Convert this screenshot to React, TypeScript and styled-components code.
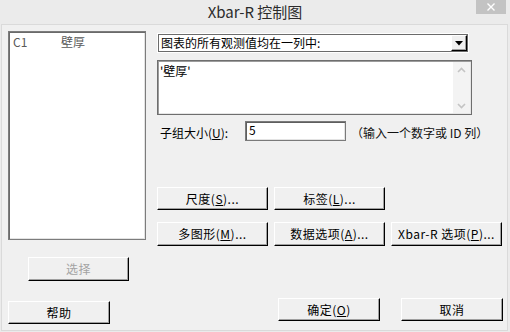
import styled, { createGlobalStyle } from 'styled-components';

const GlobalStyle = createGlobalStyle`
  html, body {
    margin: 0;
    padding: 0;
    background: #ebebeb;
  }
  body {
    font-family: "Noto Sans CJK SC", "Liberation Sans", sans-serif;
    font-size: 12px;
    color: #000;
  }
  * {
    box-sizing: border-box;
  }
`;

const Window = styled.div`
  width: 510px;
  height: 332px;
  display: flex;
  flex-direction: column;
  background: #ebebeb;
  overflow: hidden;
`;

const TitleBar = styled.div`
  height: 24px;
  display: grid;
  grid-template-columns: 1fr auto 1fr;
`;

const Title = styled.div`
  grid-column: 2;
  align-self: center;
  font-size: 15px;
  line-height: 20px;
  color: #2b2b2b;
`;

const CloseButton = styled.div`
  grid-column: 3;
  justify-self: end;
  align-self: start;
  margin-right: 4px;
  width: 30px;
  height: 14px;
  background: #c3c3c3;
  display: flex;
  align-items: center;
  justify-content: center;
`;

const Dialog = styled.div`
  flex: 1;
  margin: 0 2px 1px 1px;
  border: 1px solid #dadada;
  background: #f0f0f0;
  display: flex;
  flex-direction: column;
`;

const Main = styled.div`
  display: grid;
  grid-template-columns: 138px 346px;
  column-gap: 11px;
  padding: 6px 0 0 6px;
`;

const LeftCol = styled.div`
  display: flex;
  flex-direction: column;
  align-items: flex-start;
`;

const ListBox = styled.div`
  width: 138px;
  height: 209px;
  background: #fff;
  border: 1px solid #7c7c7c;
  box-shadow: inset 1px 1px 0 #6a6a6a, inset -1px -1px 0 #e3e3e3;
  padding: 3px 0 0 4px;
`;

const ListRow = styled.div`
  display: grid;
  grid-template-columns: 48px auto;
  color: #5a5a5a;
  line-height: 14px;
`;

const Btn = styled.button<{ $w: number; $h?: number; $mt?: number; $ml?: number }>`
  width: ${(p) => p.$w}px;
  height: ${(p) => p.$h ?? 23}px;
  margin: ${(p) => p.$mt ?? 0}px 0 0 ${(p) => p.$ml ?? 0}px;
  padding: 0;
  font-family: "Noto Sans CJK SC", "Liberation Sans", sans-serif;
  font-size: 12px;
  line-height: 14px;
  color: #000;
  background: #f0f0f0;
  border-top: 1px solid #fff;
  border-left: 1px solid #fff;
  border-right: 1px solid #000;
  border-bottom: 1px solid #000;
  box-shadow: inset -1px -1px 0 #a0a0a0;
  display: flex;
  align-items: center;
  justify-content: center;
  letter-spacing: 0.5px;

  &:disabled {
    color: #a3a3a3;
  }
`;

const RightCol = styled.div`
  display: flex;
  flex-direction: column;
  align-items: flex-start;
`;

const Combo = styled.div`
  margin: 3px 0 0 1px;
  width: 310px;
  height: 18px;
  border: 1px solid #6b6b6b;
  box-shadow: 0 0 0 1px #fff;
  background: #fff;
  display: flex;
  align-items: center;
`;

const ComboText = styled.div`
  flex: 1;
  padding-left: 2px;
  line-height: 16px;
`;

const ComboArrow = styled.div`
  width: 16px;
  height: 16px;
  background: #f0f0f0;
  border-top: 1px solid #fff;
  border-left: 1px solid #fff;
  border-right: 1px solid #000;
  border-bottom: 1px solid #000;
  box-shadow: inset -1px -1px 0 #a0a0a0;
  display: flex;
  align-items: center;
  justify-content: center;
`;

const TextArea = styled.div`
  margin-top: 8px;
  width: 315px;
  height: 55px;
  border: 1px solid #6e6e6e;
  box-shadow: inset 1px 1px 0 #9c9c9c, inset -1px -1px 0 #e6e6e6;
  background: #fff;
  display: flex;
  padding: 1px;
`;

const TextAreaContent = styled.div`
  flex: 1;
  padding: 2px 0 0 1px;
  line-height: 14px;
`;

const ScrollTrack = styled.div`
  width: 17px;
  background: #f3f3f3;
  display: flex;
  flex-direction: column;
  justify-content: space-between;
  align-items: center;
  padding: 5px 0 4px;
`;

const FieldRow = styled.div`
  margin-top: 6px;
  height: 20px;
  display: flex;
  align-items: center;
`;

const FieldLabel = styled.div`
  width: 88px;
  padding-left: 3px;
  padding-top: 2px;
`;

const Input = styled.div`
  width: 101px;
  height: 20px;
  background: #fff;
  border: 1px solid #7a7a7a;
  box-shadow: inset 1px 1px 0 #5e5e5e, inset -1px -1px 0 #e3e3e3;
  padding: 1px 0 0 3px;
  line-height: 14px;
`;

const Hint = styled.div`
  margin-left: 5px;
  padding-top: 2px;
  color: #111;
`;

const ButtonGrid = styled.div`
  margin-top: 46px;
  display: grid;
  grid-template-columns: repeat(3, 111px);
  grid-auto-rows: 23px;
  column-gap: 6px;
  row-gap: 12px;
`;

const BottomRow = styled.div`
  display: flex;
  align-items: flex-start;
  margin-top: 17px;
  padding-left: 6px;
`;

const Chevron = ({ up }: { up?: boolean }) => (
  <svg width="9" height="6" viewBox="0 0 9 6">
    <polyline
      points={up ? '1,5 4.5,1.5 8,5' : '1,1 4.5,4.5 8,1'}
      fill="none"
      stroke="#c4c4c4"
      strokeWidth="1.6"
    />
  </svg>
);

export default function App() {
  return (
    <>
      <GlobalStyle />
      <Window>
        <TitleBar>
          <Title>Xbar-R 控制图</Title>
          <CloseButton>
            <svg width="10" height="10" viewBox="0 0 10 10">
              <path d="M1.5 1.5 L8.5 8.5 M8.5 1.5 L1.5 8.5" stroke="#fff" strokeWidth="1.4" />
            </svg>
          </CloseButton>
        </TitleBar>

        <Dialog>
          <Main>
            <LeftCol>
              <ListBox>
                <ListRow>
                  <span>C1</span>
                  <span>壁厚</span>
                </ListRow>
              </ListBox>
              <Btn $w={101} $h={24} $mt={17} $ml={20} disabled>
                选择
              </Btn>
            </LeftCol>

            <RightCol>
              <Combo>
                <ComboText>图表的所有观测值均在一列中:</ComboText>
                <ComboArrow>
                  <svg width="8" height="5" viewBox="0 0 8 5">
                    <polygon points="0,0 8,0 4,4.5" fill="#000" />
                  </svg>
                </ComboArrow>
              </Combo>

              <TextArea>
                <TextAreaContent>'壁厚'</TextAreaContent>
                <ScrollTrack>
                  <Chevron up />
                  <Chevron />
                </ScrollTrack>
              </TextArea>

              <FieldRow>
                <FieldLabel>
                  子组大小(<u>U</u>):
                </FieldLabel>
                <Input>5</Input>
                <Hint>（输入一个数字或 ID 列）</Hint>
              </FieldRow>

              <ButtonGrid>
                <Btn $w={111}>
                  尺度(<u>S</u>)...
                </Btn>
                <Btn $w={111}>
                  标签(<u>L</u>)...
                </Btn>
                <span />
                <Btn $w={111} $h={24}>
                  多图形(<u>M</u>)...
                </Btn>
                <Btn $w={111} $h={24}>
                  数据选项(<u>A</u>)...
                </Btn>
                <Btn $w={111} $h={24}>
                  Xbar-R 选项(<u>P</u>)...
                </Btn>
              </ButtonGrid>
            </RightCol>
          </Main>

          <BottomRow>
            <Btn $w={102} $mt={3}>
              帮助
            </Btn>
            <Btn $w={102} $ml={168}>
              确定(<u>O</u>)
            </Btn>
            <Btn $w={102} $ml={21}>
              取消
            </Btn>
          </BottomRow>
        </Dialog>
      </Window>
    </>
  );
}
